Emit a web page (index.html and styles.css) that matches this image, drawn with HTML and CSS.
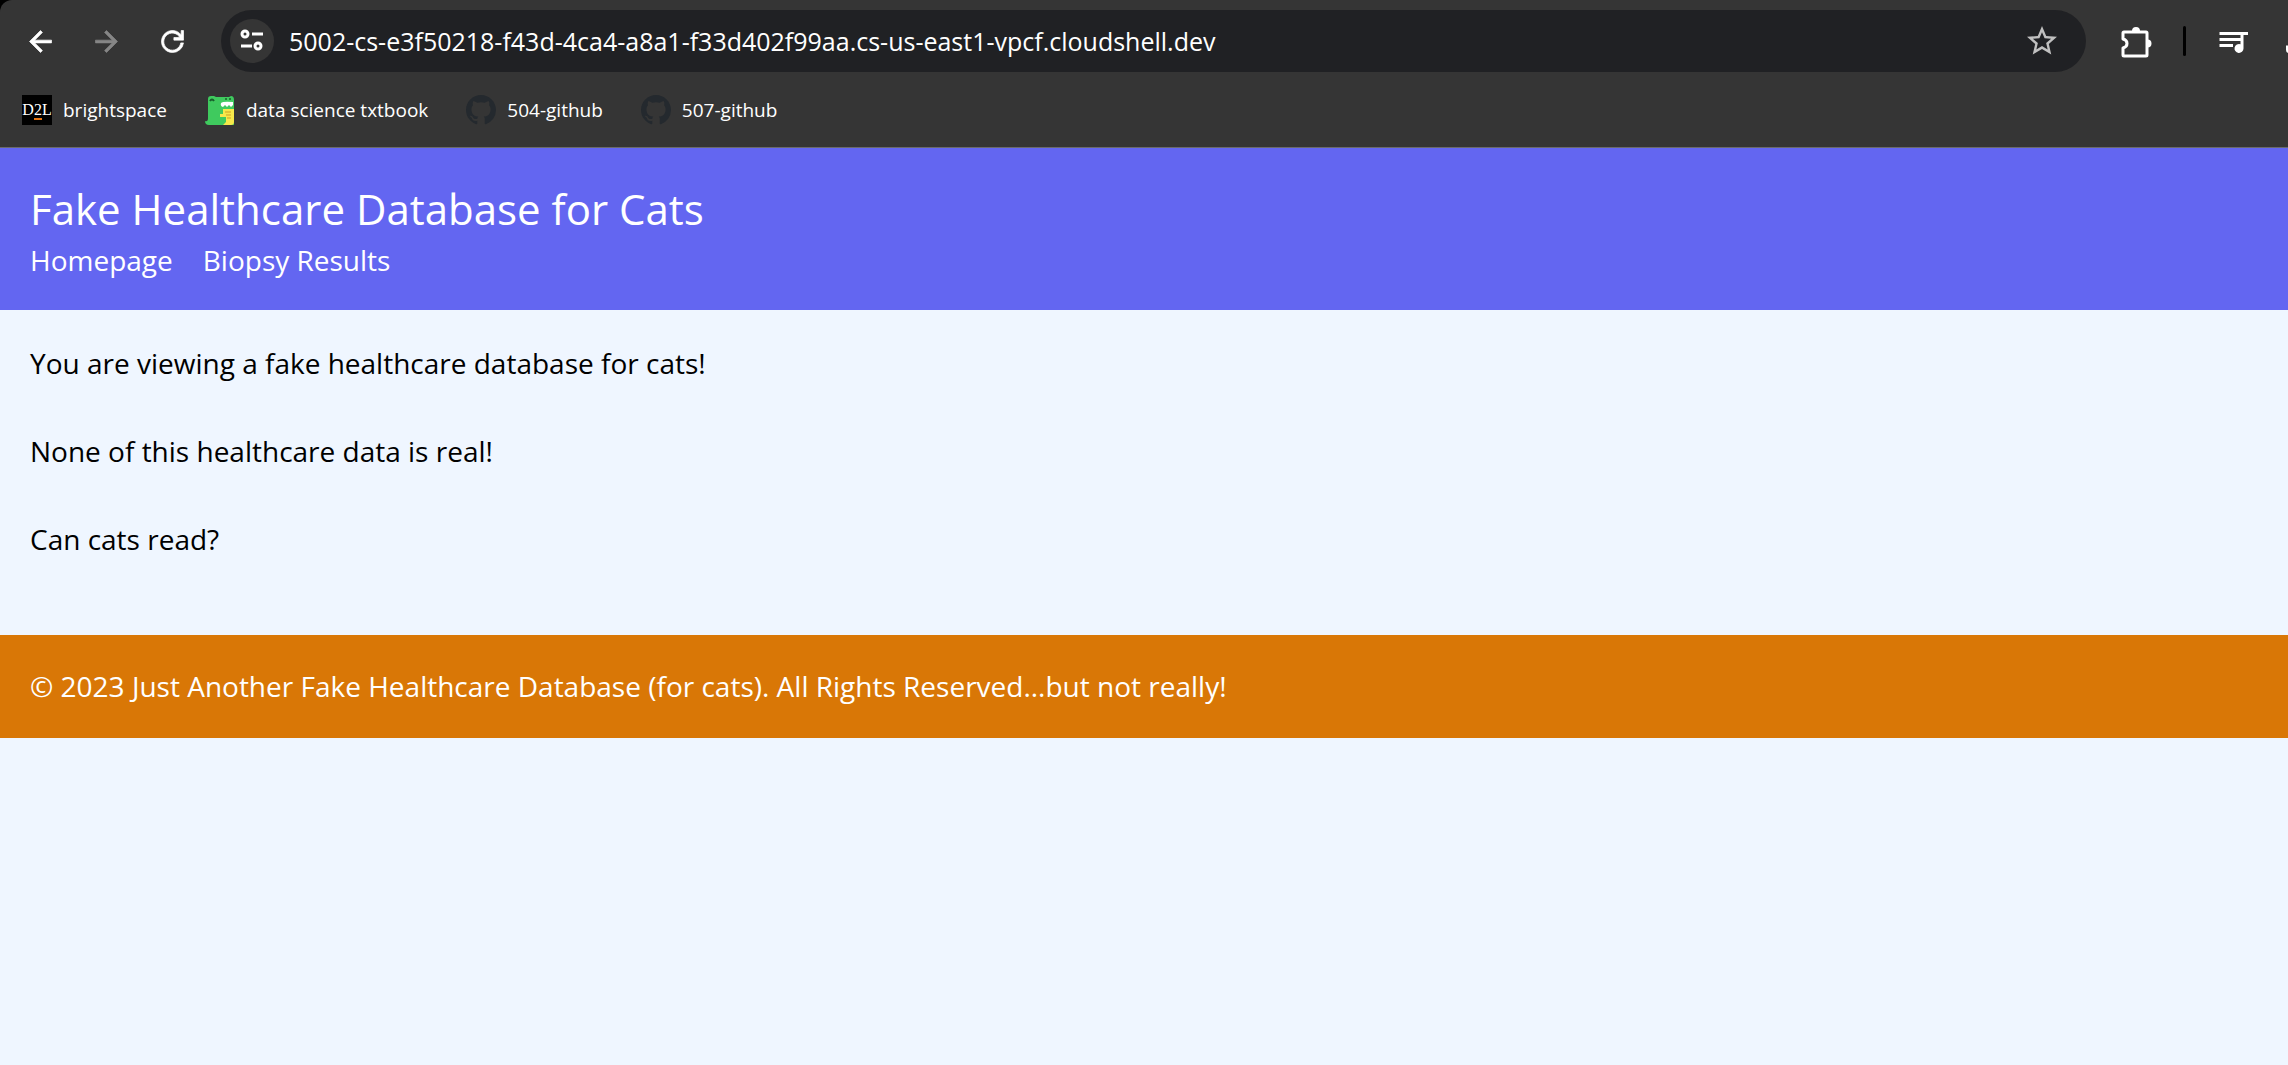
FILE: index.html
```html
<!DOCTYPE html>
<html lang="en">
<head>
<meta charset="utf-8">
<title>Fake Healthcare Database for Cats</title>
<link rel="stylesheet" href="styles.css">
</head>
<body>
<div class="browser">
  <div class="toolbar">
    <div class="nav-buttons">
      <button class="icon-button" type="button" aria-label="Back">
        <svg class="icon-nav" viewBox="0 0 24 24"><path d="M20 11H7.8l5.6-5.6L12 4l-8 8 8 8 1.4-1.4L7.8 13H20z"/></svg>
      </button>
      <button class="icon-button is-disabled" type="button" aria-label="Forward" disabled>
        <svg class="icon-nav" viewBox="0 0 24 24"><path d="M4 11h12.2l-5.6-5.6L12 4l8 8-8 8-1.4-1.4 5.6-5.6H4z"/></svg>
      </button>
      <button class="icon-button" type="button" aria-label="Reload">
        <svg class="icon-nav" viewBox="0 0 24 24"><path d="M12 20a8 8 0 1 1 6.3-12.9V4H20v7h-7V9.100h4.300A6.200 6.200 0 1 0 18 13h2A8 8 0 0 1 12 20z"/></svg>
      </button>
    </div>
    <div class="address">
      <button class="site-info" type="button" aria-label="Site information">
        <svg class="icon-site" viewBox="0 0 28 28"><circle cx="7" cy="7" r="3"/><path d="M14 7h11M3 19h11"/><circle cx="20" cy="19" r="3"/></svg>
      </button>
      <input class="url" type="text" aria-label="Address" value="5002-cs-e3f50218-f43d-4ca4-a8a1-f33d402f99aa.cs-us-east1-vpcf.cloudshell.dev">
      <button class="icon-button star" type="button" aria-label="Bookmark this page">
        <svg class="icon" viewBox="0 0 24 24"><path d="M22 9.240l-7.190-.62L12 2 9.190 8.630 2 9.240l5.460 4.730L5.820 21 12 17.270 18.180 21l-1.630-7.030zM12 15.400l-3.760 2.270 1-4.280-3.320-2.880 4.380-.38L12 6.100l1.710 4.040 4.380.38-3.320 2.880 1 4.280z"/></svg>
      </button>
    </div>
    <div class="tools">
      <button class="icon-button" type="button" aria-label="Extensions">
        <svg class="icon" viewBox="0 0 36 36"><path class="outline" d="M6 9h22q1 0 1 1v22q0 1-1 1H6q-1 0-1-1v-7q4-1 4-4.500T5 16v-6q0-1 1-1z"/><path d="M14 8a4 4 0 0 1 8 0zM29.500 16.500a4 4 0 0 1 0 8z"/></svg>
      </button>
      <span class="divider"></span>
      <button class="icon-button" type="button" aria-label="Media">
        <svg class="icon" viewBox="0 0 24 24"><path d="M17 6H3v2h14zm0 4H3v2h14zM3 16h9v-2H3zM17 6v8.180A3 3 0 1 0 19 17V8h3V6z"/></svg>
      </button>
      <button class="icon-button" type="button" aria-label="Downloads">
        <svg class="icon" viewBox="0 0 24 24"><path d="M4 15v3a2 2 0 0 0 2 2h12a2 2 0 0 0 2-2v-3h-2v3H6v-3zM11 4h2v8l3-3 1 2-5 5-5-5 1-2 3 3z"/></svg>
      </button>
    </div>
  </div>
  <nav class="bookmarks" aria-label="Bookmarks">
    <a class="bookmark" href="#"><span class="d2l">D<span class="d2l-two">2</span>L</span>brightspace</a>
    <a class="bookmark" href="#">
      <svg class="favicon" viewBox="0 0 30 30"><path d="M3 4Q3 1 6 1l3 0 2 1h13l2-1q3 0 3 4v25H4Q0 30 0 26q3 1 3-3z" fill="#3fca5e"/><path d="M18 14h11v13q0 3-3 3h-8l3-3v-5h-6v-3h3z" fill="#f6e84a"/><path d="M16 8q2-2 12-1v3l-2 2-2-2-2 2-2-2-2 2q-3-1-2-4z" fill="#fff"/><path d="M20 17h6M21 20h5M22 23h4" stroke="#cf9f24"/><path d="M5 6q2-3 4 0" fill="none" stroke="#185c2b" stroke-width="2"/><circle cx="21" cy="4" r="1" fill="#185c2b"/><circle cx="25" cy="4" r="1" fill="#185c2b"/></svg>data science txtbook</a>
    <a class="bookmark" href="#">
      <svg class="favicon github" viewBox="0 0 16 16"><path d="M8 0C3.580 0 0 3.580 0 8c0 3.540 2.290 6.530 5.470 7.590.4.070.55-.17.55-.38 0-.19-.01-.82-.01-1.490-2.010.37-2.530-.49-2.690-.94-.09-.23-.48-.94-.82-1.130-.28-.15-.68-.52-.01-.53.63-.01 1.080.58 1.230.82.72 1.210 1.870.87 2.330.66.07-.52.28-.87.51-1.070-1.780-.2-3.640-.89-3.640-3.950 0-.87.31-1.590.82-2.150-.08-.2-.36-1.020.08-2.120 0 0 .67-.21 2.200.82.64-.18 1.320-.27 2-.27s1.360.09 2 .27c1.530-1.040 2.200-.82 2.200-.82.44 1.100.16 1.920.08 2.120.51.56.82 1.270.82 2.150 0 3.070-1.870 3.750-3.650 3.950.29.25.54.73.54 1.480 0 1.070-.01 1.930-.01 2.200 0 .21.15.46.55.38A8 8 0 0 0 16 8c0-4.420-3.580-8-8-8z"/></svg>504-github</a>
    <a class="bookmark" href="#">
      <svg class="favicon github" viewBox="0 0 16 16"><path d="M8 0C3.580 0 0 3.580 0 8c0 3.540 2.290 6.530 5.470 7.590.4.070.55-.17.55-.38 0-.19-.01-.82-.01-1.490-2.010.37-2.530-.49-2.690-.94-.09-.23-.48-.94-.82-1.130-.28-.15-.68-.52-.01-.53.63-.01 1.080.58 1.230.82.72 1.210 1.870.87 2.330.66.07-.52.28-.87.51-1.070-1.780-.2-3.640-.89-3.640-3.950 0-.87.31-1.590.82-2.150-.08-.2-.36-1.020.08-2.120 0 0 .67-.21 2.200.82.64-.18 1.320-.27 2-.27s1.360.09 2 .27c1.530-1.040 2.200-.82 2.200-.82.44 1.100.16 1.920.08 2.120.51.56.82 1.270.82 2.150 0 3.070-1.870 3.750-3.650 3.950.29.25.54.73.54 1.480 0 1.070-.01 1.930-.01 2.200 0 .21.15.46.55.38A8 8 0 0 0 16 8c0-4.420-3.580-8-8-8z"/></svg>507-github</a>
  </nav>
</div>
<header class="site-header">
  <h1 class="site-title">Fake Healthcare Database for Cats</h1>
  <nav class="site-nav">
    <a href="#">Homepage</a>
    <a href="#">Biopsy Results</a>
  </nav>
</header>
<main class="content">
  <p>You are viewing a fake healthcare database for cats!</p>
  <p>None of this healthcare data is real!</p>
  <p>Can cats read?</p>
</main>
<footer class="site-footer">© 2023 Just Another Fake Healthcare Database (for cats). All Rights Reserved...but not really!</footer>
</body>
</html>
```
FILE: styles.css
```css
* { box-sizing: border-box; }
body {
  margin: 0;
  background: #eff6ff;
  color: #000;
  font: 28px/44px "Segoe UI", "Open Sans", sans-serif;
}
a { color: inherit; text-decoration: none; }
button { padding: 0; border: 0; background: none; color: inherit; }
svg { display: block; fill: currentColor; }

.browser {
  overflow: hidden;
  background: #000;
  border-bottom: 1px solid #6b6b6b;
  color: #fff;
}
.toolbar {
  display: flex;
  align-items: center;
  padding: 10px 0 11px 24px;
  border-top-left-radius: 12px;
  background: #353535;
}
.nav-buttons { display: flex; gap: 33px; margin-right: 32px; }
.icon-button { flex: none; }
.is-disabled { color: #868686; }
.icon { width: 36px; height: 36px; }
.icon-nav {
  width: 33px;
  height: 33px;
  stroke: currentColor;
  stroke-width: 0.5;
}
.outline {
  fill: none;
  stroke: currentColor;
  stroke-width: 3;
  stroke-linejoin: round;
}
.address {
  display: flex;
  flex: 1;
  align-items: center;
  height: 62px;
  padding: 0 26px 0 9px;
  border-radius: 31px;
  background: #202124;
}
.site-info {
  display: grid;
  place-items: center;
  width: 44px;
  height: 44px;
  border-radius: 50%;
  background: #353535;
}
.icon-site {
  width: 28px;
  height: 28px;
  fill: none;
  stroke: currentColor;
  stroke-width: 3;
}
.url {
  flex: 1;
  min-width: 0;
  padding: 0 0 0 15px;
  border: 0;
  outline: 0;
  background: none;
  color: #fff;
  font: 25px/40px "Segoe UI", "Open Sans", sans-serif;
}
.star { color: #c0c0c0; }
.tools {
  display: flex;
  flex: none;
  align-items: center;
  gap: 29px;
  width: 202px;
  padding-left: 32px;
}
.divider {
  flex: none;
  width: 3px;
  height: 30px;
  border-radius: 2px;
  background: #000;
}
.bookmarks {
  display: flex;
  gap: 38px;
  padding: 12px 22px 22px;
  background: #353535;
  font-size: 19px;
  line-height: 30px;
}
.bookmark { display: flex; gap: 11px; }
.favicon { width: 30px; height: 30px; }
.github { color: #24292e; }
.d2l {
  width: 30px;
  background: #000;
  font: 16px/30px "Liberation Serif", serif;
  text-align: center;
}
.d2l-two { border-bottom: 2px solid #e87511; }

.site-header {
  padding: 32px 30px 28px;
  background: #6366f1;
  color: #fff;
}
.site-title {
  margin: 0;
  font-size: 42px;
  font-weight: 400;
  line-height: 58px;
}
.site-nav { display: flex; gap: 30px; }
.content { padding: 31px 30px 30px; }
.content p { margin: 0 0 44px; }
.site-footer {
  padding: 29px 30px 30px;
  background: #d97706;
  color: #fff;
}
```
